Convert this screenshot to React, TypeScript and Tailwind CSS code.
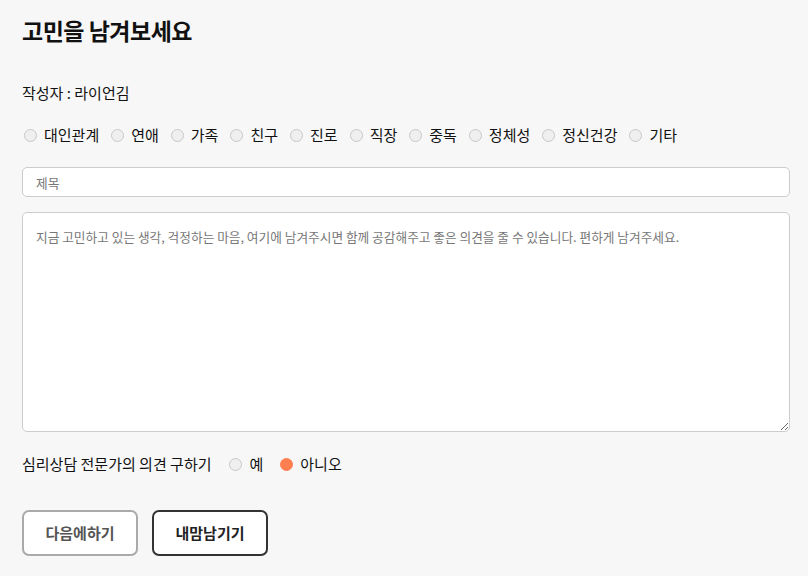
import React, { useState } from "react";

const categories = ["대인관계", "연애", "가족", "친구", "진로", "직장", "중독", "정체성", "정신건강", "기타"];

const Radio = ({
  label,
  checked,
  onChange,
  className,
}: {
  label: string;
  checked: boolean;
  onChange: () => void;
  className?: string;
}) => (
  <label className={"flex items-center gap-[7px] cursor-pointer " + (className ?? "")}>
    <span
      onClick={onChange}
      className={
        "inline-block size-[13px] rounded-full border " +
        (checked ? "bg-[#ff7f50] border-[#ff7f50]" : "bg-[#efefef] border-[#c8c8c8]")
      }
    ></span>
    <span onClick={onChange}>{label}</span>
  </label>
);

const App = () => {
  const [category, setCategory] = useState("");
  const [expert, setExpert] = useState("no");

  return (
    <div
      className="min-h-[576px] bg-[#f7f7f7] pl-[22px] pr-[18px] pt-[14px] text-[#111] text-[15px]"
      style={{ fontFamily: '"Noto Sans CJK KR", "Noto Sans", sans-serif' }}
    >
      <h1 className="text-[23px] font-bold leading-[32px] tracking-[-0.5px]">고민을 남겨보세요</h1>

      <p className="mt-[36px] leading-[22px]">작성자 : 라이언김</p>

      {/* Category */}
      <div className="mt-[20px] flex items-center gap-[12px] leading-[22px] pl-[2px]">
        {categories.map((c) => (
          <Radio key={c} label={c} checked={category === c} onChange={() => setCategory(c)} />
        ))}
      </div>

      <input
        className="mt-[21px] block w-full h-[30px] rounded-[5px] border border-[#cccccc] bg-white px-[13px] text-[12.7px] placeholder:text-[#777] outline-none"
        placeholder="제목"
      />

      <textarea
        className="mt-[15px] block w-full h-[220px] rounded-[5px] border border-[#cccccc] bg-white px-[13px] pt-[14px] text-[12.7px] leading-[20px] placeholder:text-[#777] outline-none"
        placeholder="지금 고민하고 있는 생각, 걱정하는 마음, 여기에 남겨주시면 함께 공감해주고 좋은 의견을 줄 수 있습니다. 편하게 남겨주세요."
      />

      {/* Expert opinion */}
      <div className="mt-[21px] flex items-center leading-[22px]">
        <span className="mr-[18px]">심리상담 전문가의 의견 구하기</span>
        <Radio label="예" checked={expert === "yes"} onChange={() => setExpert("yes")} className="mr-[17px]" />
        <Radio label="아니오" checked={expert === "no"} onChange={() => setExpert("no")} />
      </div>

      <div className="mt-[35px] flex gap-[14px]">
        <button className="w-[116px] h-[46px] rounded-[7px] border-2 border-[#aaaaaa] bg-white text-[15px] font-bold text-[#555]">
          다음에하기
        </button>
        <button className="w-[116px] h-[46px] rounded-[7px] border-2 border-[#333333] bg-white text-[15px] font-bold text-[#222]">
          내맘남기기
        </button>
      </div>
    </div>
  );
};

export default App;
